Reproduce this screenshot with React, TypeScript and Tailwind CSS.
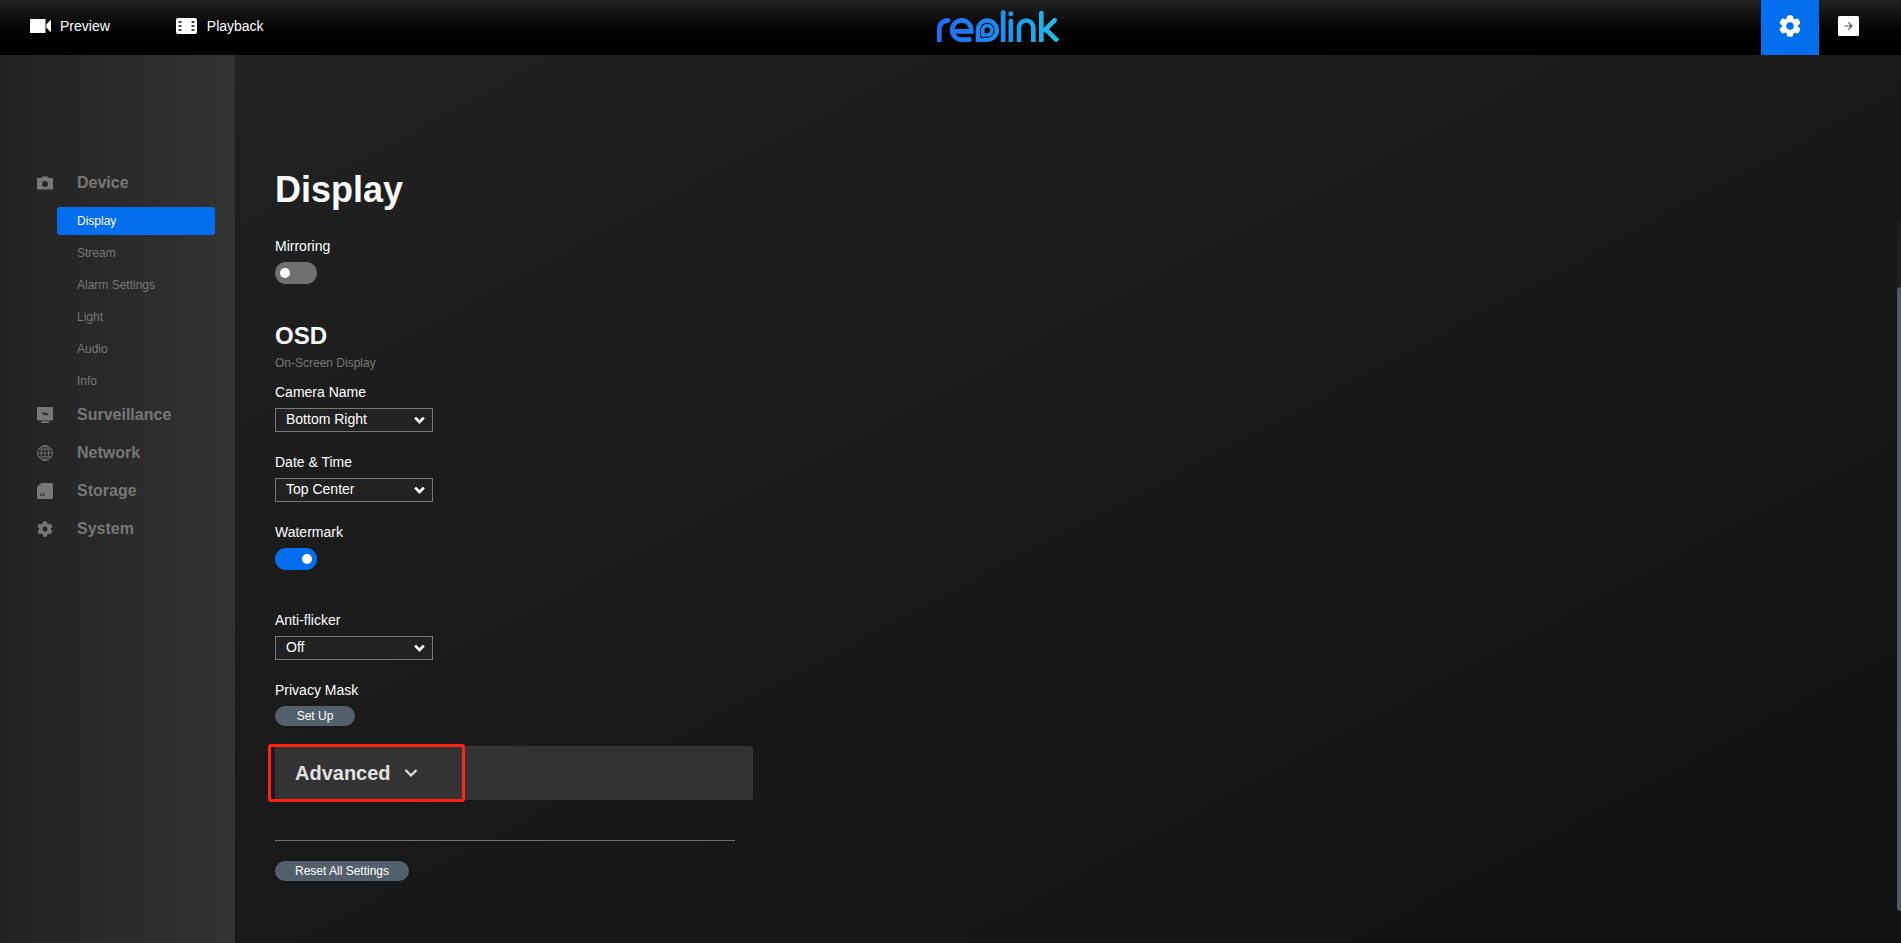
import { useState } from "react";
import type { ReactNode } from "react";
import { FaCog } from "react-icons/fa";

const DEVICE_PAGES = ["Display", "Stream", "Alarm Settings", "Light", "Audio", "Info"];
const POSITIONS = ["Top Left", "Top Center", "Top Right", "Bottom Left", "Bottom Center", "Bottom Right", "Hide"];

function PreviewIcon() {
  return (
    <svg width="22" height="16" viewBox="0 0 22 16" fill="currentColor" aria-hidden>
      <path d="M0 1h15.5v14H0zM16.300 6.500L20 2.600q1-.8 1 .4v10q0 1.200-1 .4l-3.700-3.900z" />
    </svg>
  );
}

function PlaybackIcon() {
  return (
    <svg width="21" height="16" viewBox="0 0 21 16" aria-hidden>
      <rect width="21" height="16" rx="2" fill="currentColor" />
      <path
        d="M2.500 4h3M2.500 8h3M2.500 12h3M15.500 4h3M15.500 8h3M15.500 12h3"
        stroke="#0c0c0c"
        strokeWidth="1.500"
      />
    </svg>
  );
}

// six round lobes around a ring
function GearIcon() {
  return (
    <svg width="22" height="22" viewBox="-11 -11 22 22" aria-hidden>
      <g fill="currentColor">
        <circle r="8" />
        {[0, 60, 120, 180, 240, 300].map((a) => (
          <rect key={a} x="-3.300" y="-10.800" width="6.600" height="6" rx="2.400" transform={`rotate(${a})`} />
        ))}
      </g>
      <circle r="3.700" fill="#056eee" />
    </svg>
  );
}

function LogoutIcon() {
  return (
    <svg width="21" height="20" viewBox="0 0 21 20" fill="none" aria-hidden>
      <rect width="21" height="20" rx="1.500" fill="#fff" />
      <path d="M6.500 10h7.500M10.300 6.300l3.700 3.700-3.700 3.700" stroke="#555" strokeWidth="1.200" />
    </svg>
  );
}

function CameraIcon() {
  return (
    <svg width="16" height="16" viewBox="0 0 16 16" fill="currentColor" fillRule="evenodd" aria-hidden>
      <path d="M5.500 1.500h5l1.500 1.500h4V14.500H0V3h4zM8 6a3 3 0 1 0 0 6 3 3 0 0 0 0-6z" />
    </svg>
  );
}

function MonitorIcon() {
  return (
    <svg width="16" height="16" viewBox="0 0 16 16" fill="currentColor" aria-hidden>
      <path d="M1 0h14q1 0 1 1v11.500q0 1-1 1H1q-1 0-1-1V1q0-1 1-1zM4 14.300h8v1.700H4z" />
      <path d="M4.500 6.200h2l1.200 1.700 1.300-1.700 1 1.500h1.500" fill="none" stroke="#262626" strokeWidth="1.300" />
    </svg>
  );
}

function GlobeIcon() {
  return (
    <svg width="16" height="16" viewBox="0 0 16 16" fill="none" stroke="currentColor" aria-hidden>
      <circle cx="8" cy="8" r="7.400" />
      <ellipse cx="8" cy="8" rx="3.800" ry="7.400" />
      <path d="M8 .6v14.800M.6 8h14.800M1.800 4.200h12.400M1.800 11.800h12.400" strokeWidth=".8" />
    </svg>
  );
}

function StorageIcon() {
  return (
    <svg width="16" height="16" viewBox="0 0 16 16" fill="currentColor" aria-hidden>
      <path d="M5 0h9.500Q16 0 16 1.500v13q0 1.500-1.500 1.500h-13Q0 16 0 14.500V5q0-1 .7-1.700L3.300.7Q4 0 5 0z" />
      <path d="M4 10.500v2.500M6.800 10.500v2.500" stroke="#262626" strokeWidth="1.300" />
    </svg>
  );
}

function Logo() {
  return (
    <svg width="122" height="32" viewBox="51 30 366 96" fill="none" role="img" aria-label="reolink">
      <defs>
        <linearGradient id="brand" gradientUnits="userSpaceOnUse" x1="51" y1="0" x2="417" y2="0">
          <stop offset="0" stopColor="#1f6cf3" />
          <stop offset="0.45" stopColor="#1f86f0" />
          <stop offset="1" stopColor="#22bce4" />
        </linearGradient>
      </defs>
      <g stroke="url(#brand)" strokeWidth="14">
        <path d="M58 126V89Q58 63 84 61" />
        <path d="M104 94H154C153.500 74 142 61 125.500 61A29 29 0 0 0 125.500 119H148" />
        <path d="M173.500 119.500V90A28.500 29 0 1 1 202 119.500z" strokeWidth="13" />
        <path d="M188 105V91A14 14 0 1 1 202 105z" strokeWidth="11" />
        <path d="M249.500 37V126M272.500 63V126" />
        <path d="M297 126V83A21.500 21.500 0 0 1 340 83V126" />
        <path d="M364 39V126M370 94L404 61M376 87L413 123" />
      </g>
      <g fill="url(#brand)">
        <circle cx="84" cy="61" r="7" />
        <circle cx="148" cy="119" r="7" />
        <circle cx="249.500" cy="37" r="7" />
        <circle cx="272.500" cy="41" r="7.500" />
        <circle cx="272.500" cy="63" r="7" />
        <circle cx="364" cy="39" r="7" />
        <circle cx="404" cy="61" r="7" />
      </g>
    </svg>
  );
}

function Chevron({ className, strokeWidth }: { className: string; strokeWidth: number }) {
  return (
    <svg
      className={className}
      viewBox="0 0 14 10"
      fill="none"
      stroke="currentColor"
      strokeWidth={strokeWidth}
      aria-hidden
    >
      <path d="M1.500 2L7 7.500 12.500 2" />
    </svg>
  );
}

function SelectField({ id, label, value, options }: { id: string; label: string; value: string; options: string[] }) {
  return (
    <div className="flex flex-col gap-1.5">
      <label htmlFor={id}>{label}</label>
      <div className="grid w-[158px] items-center">
        <select
          id={id}
          defaultValue={value}
          className="col-start-1 row-start-1 h-6 w-full appearance-none border border-[#777] bg-[#222] pr-8 pb-0.5 pl-2.5 text-sm/5 outline-none"
        >
          {options.map((o) => (
            <option key={o}>{o}</option>
          ))}
        </select>
        <Chevron
          className="pointer-events-none col-start-1 row-start-1 mr-2 mb-px h-2 w-[11px] justify-self-end"
          strokeWidth={3.5}
        />
      </div>
    </div>
  );
}

function ToggleField({ id, label, on }: { id: string; label: string; on?: boolean }) {
  return (
    <div className="flex flex-col gap-1.5">
      <label htmlFor={id}>{label}</label>
      <input
        id={id}
        type="checkbox"
        defaultChecked={on}
        className="flex h-[22px] w-[42px] appearance-none items-center rounded-full bg-[#707070] px-[5px] before:size-2.5 before:rounded-full before:bg-white checked:justify-end checked:bg-[#056eee]"
      />
    </div>
  );
}

function NavSection({ icon, label }: { icon: ReactNode; label: string }) {
  return (
    <a href="#" className="flex h-[38px] items-center gap-6 pl-[37px] text-base font-bold">
      {icon}
      {label}
    </a>
  );
}

export default function App() {
  const [page, setPage] = useState("Display");
  const [advanced, setAdvanced] = useState(false);

  return (
    <div className="flex min-h-screen flex-col bg-[#1a1a1a] font-['Liberation_Sans',Arial,sans-serif] text-sm/5 text-white">
      <header className="grid h-[55px] grid-cols-3 bg-linear-to-b from-[#222] to-black">
        <nav className="flex items-center gap-[66px] pb-1 pl-[30px]">
          <a href="#" className="flex items-center gap-2">
            <PreviewIcon />
            Preview
          </a>
          <a href="#" className="flex items-center gap-2.5">
            <PlaybackIcon />
            Playback
          </a>
        </nav>
        <div className="flex items-start justify-center pt-2.5 pl-24">
          <Logo />
        </div>
        <div className="flex justify-end pr-[42px]">
          <button className="grid w-[58px] place-items-center bg-[#056eee] pb-1" aria-label="Settings">
            <GearIcon />
          </button>
          <button className="pb-1 pl-[19px]" aria-label="Log out">
            <LogoutIcon />
          </button>
        </div>
      </header>

      <div className="flex flex-1">
        <aside className="w-[235px] shrink-0 bg-linear-to-r from-[#222] to-[#333] pt-[109px] text-[#777]">
          <NavSection icon={<CameraIcon />} label="Device" />
          <div className="flex flex-col gap-1 pt-[5px] pr-5 pb-px pl-[57px]">
            {DEVICE_PAGES.map((p) => (
              <a
                key={p}
                href="#"
                onClick={() => setPage(p)}
                className={`flex h-7 items-center rounded-[3px] pl-5 text-xs ${
                  page === p ? "bg-[#056eee] text-white" : ""
                }`}
              >
                {p}
              </a>
            ))}
          </div>
          <NavSection icon={<MonitorIcon />} label="Surveillance" />
          <NavSection icon={<GlobeIcon />} label="Network" />
          <NavSection icon={<StorageIcon />} label="Storage" />
          <NavSection icon={<FaCog className="size-4" />} label="System" />
        </aside>

        <main className="relative flex-1 bg-linear-to-br from-[#212121] to-[#111] pt-[115px] pb-10 pl-10">
          <h1 className="mb-[26px] text-4xl/10 font-bold text-[#f8fafc]">Display</h1>
          <ToggleField id="mirroring" label="Mirroring" />

          <h2 className="mt-9 text-2xl/8 font-bold text-[#f8fafc]">OSD</h2>
          <p className="mt-px mb-[9px] text-xs/5 text-[#777]">On-Screen Display</p>
          <div className="flex flex-col gap-5">
            <SelectField id="camera-name" label="Camera Name" value="Bottom Right" options={POSITIONS} />
            <SelectField id="date-time" label="Date & Time" value="Top Center" options={POSITIONS} />
            <ToggleField id="watermark" label="Watermark" on />
          </div>

          <div className="mt-10 flex flex-col gap-5">
            <SelectField id="anti-flicker" label="Anti-flicker" value="Off" options={["Off", "50Hz", "60Hz"]} />
            <div className="flex flex-col items-start gap-1.5">
              <span id="privacy-mask">Privacy Mask</span>
              <button aria-describedby="privacy-mask" className="h-5 w-20 rounded-full bg-[#535f6b] text-xs">
                Set Up
              </button>
            </div>
            <div className="relative w-[478px] rounded-[3px] bg-[#333]">
              <button
                aria-expanded={advanced}
                onClick={() => setAdvanced(!advanced)}
                className="flex h-[54px] w-full items-center gap-[13px] pl-5 text-xl font-bold text-[#e2e2e2]"
              >
                Advanced
                <Chevron className="h-2.5 w-3.5" strokeWidth={2.2} />
              </button>
              <div className="pointer-events-none absolute -inset-y-0.5 -left-[7px] w-[197px] rounded-[3px] border-3 border-[#ff2113]" />
            </div>
          </div>

          <hr className="mt-10 w-[460px] border-[#707070]" />
          <button className="mt-5 h-5 w-[134px] rounded-full bg-[#535f6b] text-xs">Reset All Settings</button>

          <div className="absolute top-[166px] right-0 bottom-8 w-1 rounded-sm bg-[#202020] pt-[66px]">
            <div className="h-full rounded-l-sm bg-[#4f5b67]" />
          </div>
        </main>
      </div>
    </div>
  );
}
